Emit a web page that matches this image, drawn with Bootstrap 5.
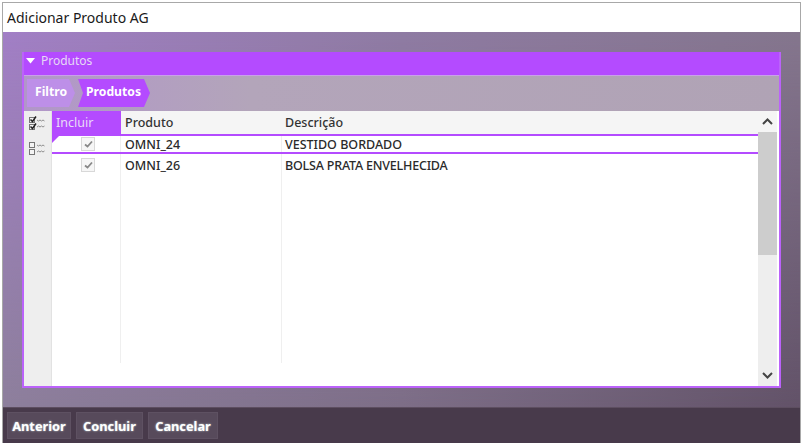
<!DOCTYPE html>
<html lang="pt">
<head>
<meta charset="utf-8">
<title>Adicionar Produto AG</title>
<link href="https://cdn.jsdelivr.net/npm/bootstrap@5.3.0/dist/css/bootstrap.min.css" rel="stylesheet">
<style>
html,body{width:803px;height:445px;overflow:hidden;background:#fff;margin:0}
body{font-family:"Noto Sans","Open Sans",sans-serif;font-size:12px;color:#222;padding:2px}
.win{width:799px;height:441px;border:1px solid #a8a8a8;border-bottom:0}
.titlebar{height:29px;background:#fff;font-size:14px;line-height:30px;padding-left:4px;color:#1a1a1a}
.stage{height:375px;padding:20px 19px 19px 19px;position:relative;background:linear-gradient(90deg,#a27fc6,#8f7ba3 50%,#85768e)}
.stage::before{content:"";position:absolute;inset:0;background:linear-gradient(90deg,#8d7f9c,#7d6e87 50%,#625268);-webkit-mask-image:linear-gradient(180deg,transparent,#000);mask-image:linear-gradient(180deg,transparent,#000)}
.foot{height:36px;background:#483a4b;padding:4px 0 0 4px;gap:5px;border-top:1px solid #5d4e60}
.fbtn{height:27px;border:1px solid #5e5162;background:#574a5b;color:#fff;font-weight:700;font-size:12.8px;line-height:24px;padding:0;border-radius:0;text-shadow:0 0 2px #cdd}
.w1{width:64px}.w2{width:67px}.w3{width:70px}
.panel{height:336px;position:relative;background:#b44bff;border-style:solid;border-color:#bb62fa;border-width:0 2px 2px 2px}
.phead{height:23px;color:#e6d9f5;padding:0 0 5px 2px;gap:6px}
.crumbs{height:36px;background:linear-gradient(90deg,#b196c9,#b3a5ba 30%,#b0a3b5);padding:3px 0 0 3px;border-top:1px solid #c9a0ea}
.crumb{height:28px;line-height:26px;color:#fff;font-weight:700;font-size:12.2px;padding-left:8px}
.c1{background:#bd8fe8;width:48px;clip-path:polygon(0 0,calc(100% - 6px) 0,100% 50%,calc(100% - 6px) 100%,0 100%)}
.c2{background:#b44bff;margin-left:3px;width:72px;clip-path:polygon(0 0,calc(100% - 6px) 0,100% 50%,calc(100% - 6px) 100%,0 100%,5px 50%)}
.gridwrap{height:275px;background:#fff}
.side{width:28px;background:#eeeeee;flex:none;padding:5px 0 0 4px;gap:10px;border-right:1px solid #e2e2e2}
.mainarea{flex:1;min-width:0;position:relative}
.hrow{height:23px;background:#f5f5f5;line-height:24px;font-size:12.5px;font-weight:500;color:#333}
.colA{width:69px;flex:none}
.colB{width:160px;flex:none;padding-left:4px}
.colC{flex:1;padding-left:4px}
.hrow .colA{background:#b44bff;color:#e9dcf7;padding-left:4px;font-weight:400}
.drow{height:24px;line-height:24px;font-size:12.5px;font-weight:500;color:#2a2a2a}
.rowsel{height:20px;border-top:2px solid #b44bff;border-bottom:2px solid #b44bff;line-height:17px;position:relative}
.rowsel::before{content:"";position:absolute;left:0;top:0;border-top:7px solid #b44bff;border-right:7px solid transparent}
.colA.ck{display:flex;justify-content:center;padding-left:3px;align-items:center}
.drow .ck{padding-bottom:2px}
.rowsel .ck{padding-bottom:0}
.tick{width:14px;height:14px;border:1px solid #d8d8d8;background:#f6f6f6;display:flex;align-items:center;justify-content:center}
.rows{position:relative;height:252px}
.vline{position:absolute;top:0;height:229px;width:1px;background:#efefef}
.vl1{left:68px}.vl2{left:229px}
.scroll{width:21px;flex:none;background:#eeeeee;border-right:2px solid #fff}
.sbtn{height:21px;display:flex;align-items:center;justify-content:center;background:#f5f5f5}
.sbtn2{background:#eeeeee}
.thumb{height:123px;background:#cdcdcd}
.sfill{flex:1}
.tight{letter-spacing:-.2px}
</style>
</head>
<body>
<div class="win d-flex flex-column">
  <div class="titlebar">Adicionar Produto AG</div>
  <div class="stage">
    <div class="panel d-flex flex-column">
      <div class="phead d-flex align-items-center">
        <svg width="9" height="6" viewBox="0 0 9 6"><path d="M0 0H9L4.500 5.500Z" fill="#fff"/></svg>
        <span>Produtos</span>
      </div>
      <div class="crumbs d-flex">
        <div class="crumb c1">Filtro</div>
        <div class="crumb c2">Produtos</div>
      </div>
      <div class="gridwrap d-flex">
        <div class="side d-flex flex-column align-items-start">
          <svg width="18" height="15" viewBox="0 0 18 15"><g fill="#f4f4f4" stroke="#777"><rect x="1.500" y="1.500" width="5" height="5"/><rect x="1.500" y="8.500" width="5" height="5"/></g><path d="M2.500 3.500l2 2 3.500-5M2.500 10.500l2 2 3.500-5" fill="none" stroke="#222" stroke-width="1.500"/><path d="M9 4l1.500 1 1.500-1 1.500 1 1.500-1 1.500 1M9 11l1.500-1 1.500 1 1.500-1 1.500 1 1.500-1" fill="none" stroke="#8f8f8f"/></svg>
          <svg width="18" height="15" viewBox="0 0 18 15"><g fill="#f4f4f4" stroke="#777"><rect x="1.500" y="1.500" width="5" height="5"/><rect x="1.500" y="8.500" width="5" height="5"/></g><path d="M9 4l1.500 1 1.500-1 1.500 1 1.500-1 1.500 1M9 11l1.500-1 1.500 1 1.500-1 1.500 1 1.500-1" fill="none" stroke="#8f8f8f"/></svg>
        </div>
        <div class="mainarea">
          <div class="hrow d-flex">
            <div class="colA">Incluir</div>
            <div class="colB">Produto</div>
            <div class="colC">Descrição</div>
          </div>
          <div class="rows">
            <div class="vline vl1"></div>
            <div class="vline vl2"></div>
            <div class="drow rowsel d-flex">
              <div class="colA ck"><span class="tick"><svg width="9" height="8" viewBox="0 0 9 8"><path d="M1 4.500l2.500 2L8 1.500" fill="none" stroke="#888" stroke-width="1.800"/></svg></span></div>
              <div class="colB">OMNI_24</div>
              <div class="colC">VESTIDO BORDADO</div>
            </div>
            <div class="drow d-flex">
              <div class="colA ck"><span class="tick"><svg width="9" height="8" viewBox="0 0 9 8"><path d="M1 4.500l2.500 2L8 1.500" fill="none" stroke="#888" stroke-width="1.800"/></svg></span></div>
              <div class="colB">OMNI_26</div>
              <div class="colC tight">BOLSA PRATA ENVELHECIDA</div>
            </div>
          </div>
        </div>
        <div class="scroll d-flex flex-column">
          <div class="sbtn"><svg width="11" height="7" viewBox="0 0 11 7"><path d="M1 6l4.500-4.500L10 6" fill="none" stroke="#444" stroke-width="2"/></svg></div>
          <div class="thumb"></div>
          <div class="sfill"></div>
          <div class="sbtn sbtn2"><svg width="11" height="7" viewBox="0 0 11 7"><path d="M1 1l4.500 4.500L10 1" fill="none" stroke="#444" stroke-width="2"/></svg></div>
        </div>
      </div>
    </div>
  </div>
  <div class="foot d-flex">
    <button class="btn fbtn w1" type="button">Anterior</button>
    <button class="btn fbtn w2" type="button">Concluir</button>
    <button class="btn fbtn w3" type="button">Cancelar</button>
  </div>
</div>
<script src="https://cdn.jsdelivr.net/npm/bootstrap@5.3.0/dist/js/bootstrap.bundle.min.js"></script>
</body>
</html>
